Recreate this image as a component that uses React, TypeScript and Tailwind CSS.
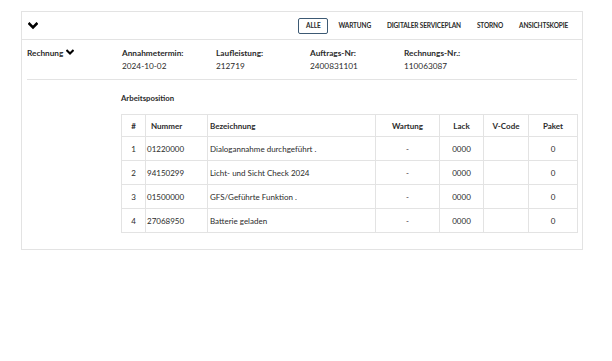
import React from "react";

const Chevron = ({ className = "" }: { className?: string }) => (
  <svg viewBox="0 0 10 8" className={className} fill="none">
    <polyline points="1.5,1.8 5,5.3 8.5,1.8" stroke="currentColor" strokeWidth="2.6" strokeLinecap="square" strokeLinejoin="miter" />
  </svg>
);

const rows = [
  { n: "1", num: "01220000", bez: "Dialogannahme durchgeführt ." },
  { n: "2", num: "94150299", bez: "Licht- und Sicht Check 2024" },
  { n: "3", num: "01500000", bez: "GFS/Geführte Funktion ." },
  { n: "4", num: "27068950", bez: "Batterie geladen" },
];

const tabs = ["WARTUNG", "DIGITALER SERVICEPLAN", "STORNO", "ANSICHTSKOPIE"];

export default function App() {
  return (
    <div
      className="w-[612px] h-[361px] bg-white text-[#2b2b2b]"
      style={{ fontFamily: "Lato, 'Open Sans', sans-serif" }}
    >
      <div className="pt-[11px] pl-[21px]">
        <div className="w-[562px] border border-[#e3e3e3]">
          {/* header */}
          <div className="h-[28px] flex items-center border-b border-[#e3e3e3] pl-[6px] pr-[6px]">
            <Chevron className="w-[10px] h-[8px] text-black" />
            <div className="ml-auto flex items-center text-[6.5px] font-bold tracking-[-0.15px]">
              <div className="h-[16px] px-[7px] flex items-center border border-[#3d5a74] rounded-[2px] mr-[2px]">
                ALLE
              </div>
              {tabs.map((t) => (
                <div key={t} className="h-[16px] px-[8px] flex items-center">
                  {t}
                </div>
              ))}
            </div>
          </div>
          {/* body */}
          <div className="px-[5px] pb-[16px]">
            <div className="flex pt-[7px] h-[40px] border-b border-[#e3e3e3] text-[8.25px] leading-[12px]">
              <div className="w-[95px] flex items-start font-bold">
                <span>Rechnung</span>
                <Chevron className="w-[8px] h-[7px] ml-[3px] mt-[2px] text-black" />
              </div>
              {[
                ["Annahmetermin:", "2024-10-02"],
                ["Laufleistung:", "212719"],
                ["Auftrags-Nr:", "2400831101"],
                ["Rechnungs-Nr.:", "110063087"],
              ].map(([l, v]) => (
                <div key={l} className="w-[94px] flex flex-col">
                  <span className="font-bold">{l}</span>
                  <span className="mt-[1px]">{v}</span>
                </div>
              ))}
            </div>
            <div className="pl-[94px] pr-[1px]">
              <div className="pt-[13px] text-[7.75px] font-bold leading-[10px]">
                Arbeitsposition
              </div>
              <table className="mt-[11px] w-[456px] border-collapse text-[8px] leading-[10px] table-fixed">
                <colgroup>
                  <col className="w-[24px]" />
                  <col className="w-[62px]" />
                  <col className="w-[168px]" />
                  <col className="w-[64px]" />
                  <col className="w-[44px]" />
                  <col className="w-[45px]" />
                  <col className="w-[49px]" />
                </colgroup>
                <thead>
                  <tr className="h-[22px] font-bold">
                    <th className="border border-[#e3e3e3] text-center font-bold">#</th>
                    <th className="border border-[#e3e3e3] text-left pl-[5px] font-bold">Nummer</th>
                    <th className="border border-[#e3e3e3] text-left pl-[2px] font-bold">Bezeichnung</th>
                    <th className="border border-[#e3e3e3] text-center font-bold">Wartung</th>
                    <th className="border border-[#e3e3e3] text-center font-bold">Lack</th>
                    <th className="border border-[#e3e3e3] text-center font-bold">V-Code</th>
                    <th className="border border-[#e3e3e3] text-center font-bold">Paket</th>
                  </tr>
                </thead>
                <tbody>
                  {rows.map((r) => (
                    <tr key={r.n} className="h-[24px]">
                      <td className="border border-[#e3e3e3] text-center">{r.n}</td>
                      <td className="border border-[#e3e3e3] pl-[1px]">{r.num}</td>
                      <td className="border border-[#e3e3e3] pl-[2px]">{r.bez}</td>
                      <td className="border border-[#e3e3e3] text-center">-</td>
                      <td className="border border-[#e3e3e3] text-center">0000</td>
                      <td className="border border-[#e3e3e3] text-center"></td>
                      <td className="border border-[#e3e3e3] text-center">0</td>
                    </tr>
                  ))}
                </tbody>
              </table>
            </div>
          </div>
        </div>
      </div>
    </div>
  );
}
